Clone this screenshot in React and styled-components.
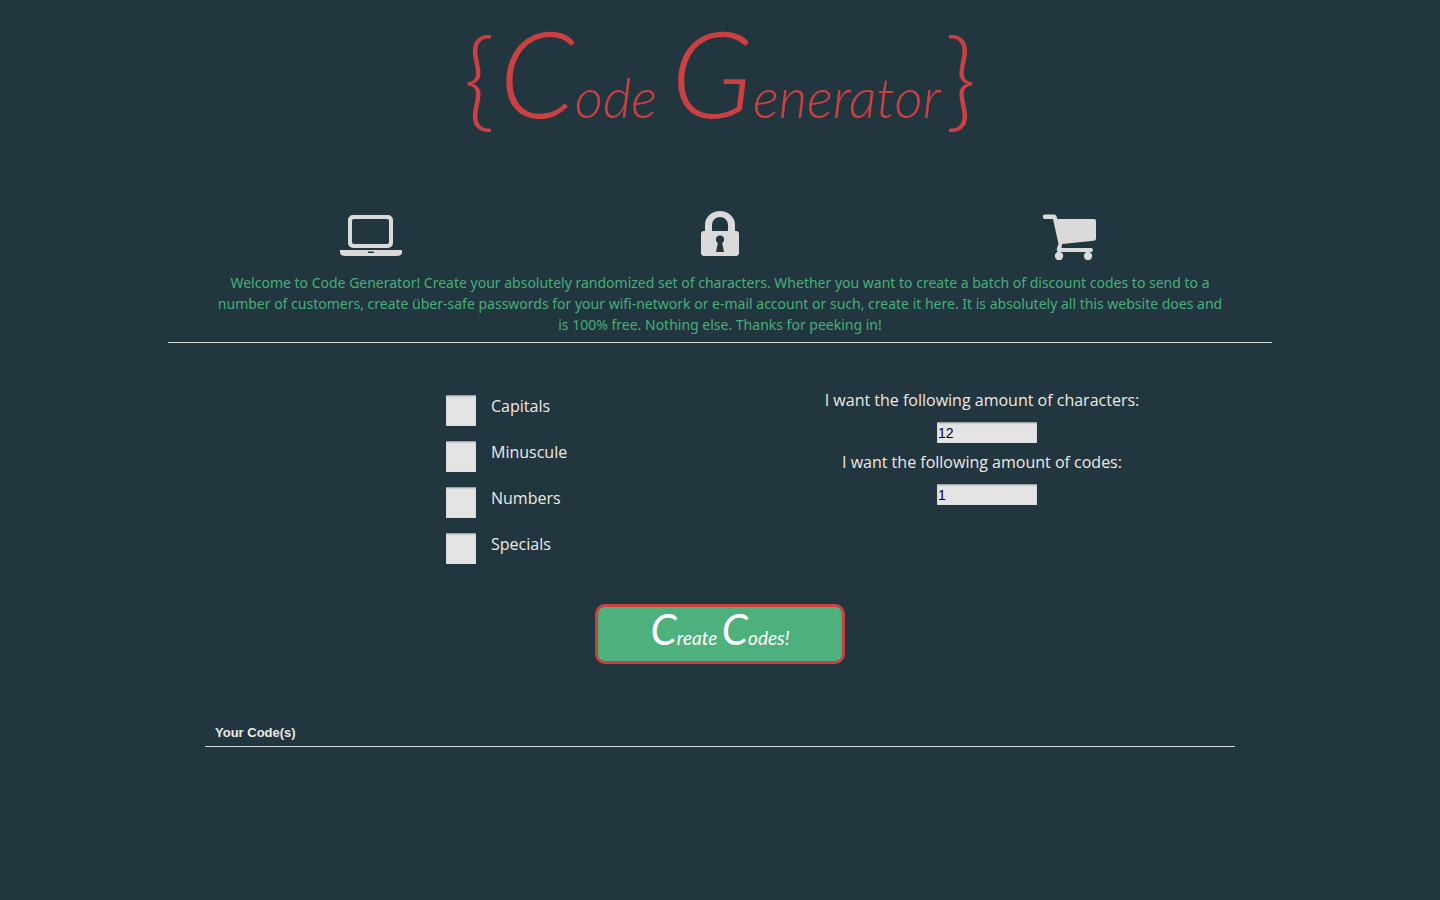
import React, { useState } from "react";
import styled, { createGlobalStyle } from "styled-components";

const colors = {
  page: "#223640",
  red: "#cd4041",
  green: "#4eb07c",
  intro: "#45b078",
  light: "#dadada",
  field: "#e4e4e4",
  text: "#efe9e0",
};

const GlobalStyle = createGlobalStyle`
  *, *::before, *::after { box-sizing: border-box; }
  body {
    margin: 0;
    background: ${colors.page};
    color: ${colors.text};
    font-family: "Open Sans", "Noto Sans", sans-serif;
    font-size: 16px;
    line-height: 22px;
  }
`;

const Page = styled.main`
  display: flex;
  flex-direction: column;
  align-items: center;
  padding: 8px 24px 0;
`;

const Title = styled.h1`
  display: flex;
  align-items: baseline;
  gap: 4px;
  margin: 0;
  height: 196px;
  color: ${colors.red};
  font-family: Lato, sans-serif;
  font-style: italic;
  font-weight: 300;
  font-size: 55px;
  line-height: 128px;
  white-space: nowrap;
`;

const Brace = styled.span`
  font-size: 108px;
  font-style: normal;
`;

const Initial = styled.span`
  font-size: ${(p) => p.$size}px;
`;

const Features = styled.ul`
  display: grid;
  grid-template-columns: repeat(3, 1fr);
  width: 100%;
  max-width: 1048px;
  margin: 0;
  padding: 0;
  list-style: none;
`;

const Feature = styled.li`
  display: flex;
  justify-content: center;
  height: 68px;

  svg {
    width: 64px;
    height: 56px;
    fill: ${colors.light};
  }
`;

const Intro = styled.section`
  width: 100%;
  max-width: 1104px;
  padding: 0 44px 7px;
  border-bottom: 1px solid #d3dade;
`;

const IntroText = styled.p`
  margin: 0;
  color: ${colors.intro};
  font-family: "Noto Sans", "Open Sans", sans-serif;
  font-size: 14px;
  line-height: 21px;
  text-align: center;
`;

const Form = styled.form`
  display: grid;
  grid-template-columns: 1fr 1fr;
  width: 100%;
  max-width: 1048px;
  padding-top: 46px;
`;

const Options = styled.fieldset`
  display: flex;
  flex-direction: column;
  gap: 15px;
  margin: 0;
  padding: 6px 0 0 250px;
  border: 0;
`;

const Option = styled.label`
  display: flex;
  gap: 15px;
`;

const Checkbox = styled.input`
  appearance: none;
  width: 30px;
  height: 31px;
  margin: 0;
  background: ${colors.field};
  box-shadow: inset 0 2px 2px -1px #8d8d8d, inset 0 0 1px #a8a8a8;

  &:checked {
    background: ${colors.green};
  }
`;

const Amounts = styled.div`
  display: flex;
  flex-direction: column;
  gap: 8px;
`;

const Amount = styled.label`
  display: flex;
  flex-direction: column;
  align-items: center;
  gap: 11px;
`;

const AmountInput = styled.input`
  width: 100px;
  height: 21px;
  margin-left: 10px;
  padding: 1px;
  border: 0;
  border-radius: 0;
  background: ${colors.field};
  box-shadow: inset 0 2px 2px -1px #8d8d8d, inset 0 0 1px #a8a8a8;
  color: #00002a;
  font: 14px "Liberation Sans", Arial, sans-serif;
`;

const CreateButton = styled.button`
  grid-column: 1 / -1;
  justify-self: center;
  width: 250px;
  height: 60px;
  margin-top: 40px;
  padding: 0 0 6px;
  border: 3px solid ${colors.red};
  border-radius: 10px;
  background: ${colors.green};
  color: #fff;
  font: italic 400 19px/44px Lato, sans-serif;
  cursor: pointer;
`;

const Codes = styled.table`
  width: 100%;
  max-width: 1030px;
  margin-top: 58px;
  border-collapse: collapse;
  font: 13px/16px "Liberation Sans", Arial, sans-serif;

  th {
    padding: 3px 10px 5px;
    border-bottom: 1px solid #d3dade;
    text-align: left;
  }
`;

const LaptopIcon = () => (
  <svg viewBox="0 0 64 56" aria-hidden="true">
    <path
      fillRule="evenodd"
      d="M14 11h35a5 5 0 0 1 5 5v23a5 5 0 0 1-5 5H14a5 5 0 0 1-5-5V16a5 5 0 0 1 5-5zm1 4a2 2 0 0 0-2 2v21a2 2 0 0 0 2 2h33a2 2 0 0 0 2-2V17a2 2 0 0 0-2-2z"
    />
    <path
      fillRule="evenodd"
      d="M1 46h62v2q0 4-5 4H6q-5 0-5-4zm28 1.500v1.500h6v-1.500z"
    />
  </svg>
);

const LockIcon = () => (
  <svg viewBox="0 0 64 56" aria-hidden="true">
    <path
      fillRule="evenodd"
      d="M17 27V21a15 14 0 0 1 30 0v6h1q3 0 3 3v19q0 3-3 3H16q-3 0-3-3V30q0-3 3-3zm7 0h16v-6a8 8 0 0 0-16 0zm8 4.500a4 4 0 0 0-2.200 7.400L28 48h8l-1.800-9.100A4 4 0 0 0 32 31.500z"
    />
  </svg>
);

const CartIcon = () => (
  <svg viewBox="0 0 64 56" aria-hidden="true">
    <path d="M8 10.500h9q2 0 2.600 2l.6 2.500H57q2 0 2 2v17.500q0 2-2 2.200L25 40l-.5 4H54a2 2 0 0 1 0 4H22q-3 0-2-4l1.500-4L16 15H8a2.250 2.250 0 0 1 0-4.500z" />
    <circle cx="22" cy="52" r="4.200" />
    <circle cx="51" cy="52" r="4.200" />
  </svg>
);

const optionNames = ["Capitals", "Minuscule", "Numbers", "Specials"];

export default function App() {
  const [characters, setCharacters] = useState("12");
  const [codes, setCodes] = useState("1");

  return (
    <>
      <GlobalStyle />
      <Page>
        <Title>
          <Brace>{"{"}</Brace>
          <span>
            <Initial $size={120}>C</Initial>ode <Initial $size={120}>G</Initial>enerator
          </span>
          <Brace>{"}"}</Brace>
        </Title>

        <Features>
          <Feature><LaptopIcon /></Feature>
          <Feature><LockIcon /></Feature>
          <Feature><CartIcon /></Feature>
        </Features>

        <Intro>
          <IntroText>
            Welcome to Code Generator! Create your absolutely randomized set of
            characters. Whether you want to create a batch of discount codes to
            send to a number of customers, create über-safe passwords for your
            wifi-network or e-mail account or such, create it here. It is
            absolutely all this website does and is 100% free. Nothing else.
            Thanks for peeking in!
          </IntroText>
        </Intro>

        <Form onSubmit={(e) => e.preventDefault()}>
          <Options>
            {optionNames.map((name) => (
              <Option key={name}>
                <Checkbox type="checkbox" name={name.toLowerCase()} />
                {name}
              </Option>
            ))}
          </Options>
          <Amounts>
            <Amount>
              I want the following amount of characters:
              <AmountInput
                type="text"
                value={characters}
                onChange={(e) => setCharacters(e.target.value)}
              />
            </Amount>
            <Amount>
              I want the following amount of codes:
              <AmountInput
                type="text"
                value={codes}
                onChange={(e) => setCodes(e.target.value)}
              />
            </Amount>
          </Amounts>
          <CreateButton type="submit">
            <Initial $size={42}>C</Initial>reate <Initial $size={42}>C</Initial>odes!
          </CreateButton>
        </Form>

        <Codes>
          <thead>
            <tr>
              <th scope="col">Your Code(s)</th>
            </tr>
          </thead>
        </Codes>
      </Page>
    </>
  );
}
